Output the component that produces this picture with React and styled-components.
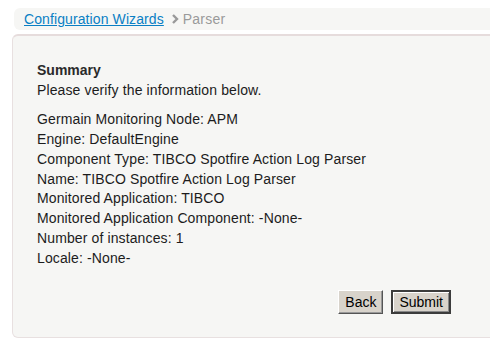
import React from 'react'
import styled, { createGlobalStyle } from 'styled-components'

const Global = createGlobalStyle`
body {
  margin: 0;
  background: #fff;
  font-family: "Liberation Sans", Arial, sans-serif;
  overflow: hidden;
}
`

const Page = styled.div`
width: 500px;
padding-top: 8px;
`

const Crumbs = styled.div`
margin-left: 14px;
height: 22px;
background: #f6f6f4;
border-radius: 6px 0 0 6px;
display: flex;
align-items: center;
padding-left: 10px;
font-size: 14px;
`

const CrumbLink = styled.a`
color: #0a7fc4;
text-decoration: underline;
letter-spacing: 0.1px;
cursor: pointer;
`

const Sep = styled.span`
display: flex;
align-items: center;
margin: 0 4px 0 8px;
`

const Current = styled.span`
color: #9a9a9a;
letter-spacing: 0.2px;
`

const Panel = styled.div`
margin: 4px 0 0 12px;
background: #f6f6f4;
border: 1px solid #e8e0e0;
border-top: 2px solid #e6dcdc;
border-radius: 6px 0 0 6px;
padding: 24px 48px 23px 24px;
height: 254px;
color: #1c1c1c;
font-size: 14px;
line-height: 19.86px;
letter-spacing: 0.12px;
`

const Heading = styled.div`
font-weight: bold;
font-size: 14px;
letter-spacing: 0;
color: #2a2a2a;
line-height: 20px;
`

const Intro = styled.div`
line-height: 20px;
`

const Lines = styled.div`
margin-top: 10px;
`

const Actions = styled.div`
display: flex;
justify-content: flex-end;
gap: 8px;
margin-top: 21px;
`

const Button = styled.button`
font-family: "Liberation Sans", Arial, sans-serif;
font-size: 14px;
height: 24px;
padding: 0 6px;
background: #d8d3cb;
color: #000;
border: ${p => (p.primary ? '2px solid #3c3c3c' : '1px solid')};
border-color: ${p => (p.primary ? '#3c3c3c' : '#fff #555 #555 #fff')};
box-shadow: ${p => (p.primary ? 'inset 1px 1px 0 #fff, inset -1px -1px 0 #888' : 'inset -1px -1px 0 #999')};
cursor: pointer;
`

const info = [
  'Germain Monitoring Node: APM',
  'Engine: DefaultEngine',
  'Component Type: TIBCO Spotfire Action Log Parser',
  'Name: TIBCO Spotfire Action Log Parser',
  'Monitored Application: TIBCO',
  'Monitored Application Component: -None-',
  'Number of instances: 1',
  'Locale: -None-',
]

export default function App() {
  return (
    <Page>
      <Global />
      <Crumbs>
        <CrumbLink>Configuration Wizards</CrumbLink>
        <Sep>
          <svg width="7" height="10" viewBox="0 0 7 10">
            <path d="M1 1 L5 5 L1 9" stroke="#999" strokeWidth="2.4" fill="none" />
          </svg>
        </Sep>
        <Current>Parser</Current>
      </Crumbs>
      <Panel>
        <Heading>Summary</Heading>
        <Intro>Please verify the information below.</Intro>
        <Lines>
          {info.map(l => (
            <div key={l}>{l}</div>
          ))}
        </Lines>
        <Actions>
          <Button>Back</Button>
          <Button primary>Submit</Button>
        </Actions>
      </Panel>
    </Page>
  )
}
